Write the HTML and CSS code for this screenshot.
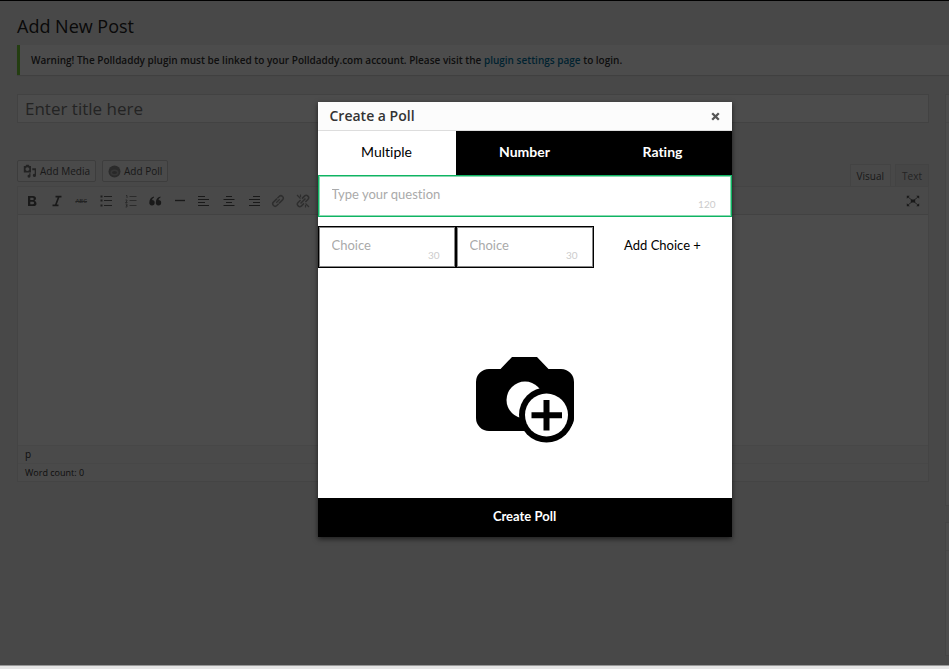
FILE: index.html
```html
<!DOCTYPE html>
<html lang="en">
<head>
<meta charset="utf-8">
<title>Add New Post</title>
<link rel="stylesheet" href="styles.css">
</head>
<body>
<div class="page">
  <h1 class="page-title">Add New Post</h1>
  <p class="notice">Warning! The Polldaddy plugin must be linked to your Polldaddy.com account. Please visit the <a href="#">plugin settings page</a> to login.</p>
  <div class="columns">
    <main class="main">
      <input class="title-input" type="text" placeholder="Enter title here" aria-label="Enter title here">
      <div class="media-row">
        <div class="media-buttons">
          <button class="wp-button" type="button">
            <svg width="14" height="14" viewBox="0 0 14 14"><path d="M.8 2h1.700l.8-1.300h2.400L6.500 2H8v6.500H.8zM4.400 3.200a1.900 1.900 0 1 0 .01 0z" fill="#777" fill-rule="evenodd"/><path d="M9.300 4.300H13v7.200a1.600 1.600 0 1 1-1.300-1.600V6.300H9.300z" fill="#777"/><path d="M6.200 9.300h1.300v2.900a1.500 1.500 0 1 1-1.300-1.500z" fill="#777"/></svg>
            Add Media</button>
          <button class="wp-button" type="button">
            <svg width="13" height="13" viewBox="0 0 13 13"><circle cx="6.500" cy="6.500" r="6" fill="#909090"/><ellipse cx="6.500" cy="7.500" rx="4" ry="3" fill="#b4b4b4"/><ellipse cx="6.500" cy="7.500" rx="2.500" ry="1.500" fill="#888"/></svg>
            Add Poll</button>
        </div>
        <div class="mode-tabs">
          <button class="mode-tab mode-tab-active" type="button">Visual</button>
          <button class="mode-tab" type="button">Text</button>
        </div>
      </div>
      <div class="editor">
        <div class="toolbar">
          <div class="tools">
            <button type="button" aria-label="Bold"><svg viewBox="0 0 14 14"><path d="M3 2h5q3 0 3 2.600 0 1.600-1.500 2.200 2 .5 2 2.600Q11.500 12 8.300 12H3zM5.300 3.800v2.300h2q1.400 0 1.400-1.200T7.300 3.800zM5.300 7.800v2.500h2.200q1.600 0 1.600-1.300T7.500 7.800z" fill="#555" fill-rule="evenodd"/></svg></button>
            <button type="button" aria-label="Italic"><svg viewBox="0 0 14 14"><path d="M5.500 2.700h6M2.500 11.300h6M8.800 2.700l-3.200 8.600" stroke="#555" stroke-width="1.700" fill="none"/></svg></button>
            <button type="button" class="strike">ABC</button>
            <button type="button" aria-label="Bulleted list"><svg viewBox="0 0 14 14"><path d="M5 2.500h8M5 6.500h8M5 11.500h8" stroke="#666"/><path d="M1.500 2.500h2M1.500 6.500h2M1.500 11.500h2" stroke="#666" stroke-width="2"/></svg></button>
            <button type="button" aria-label="Numbered list"><svg viewBox="0 0 14 14"><path d="M5.500 2.500h7M5.500 6.500h7M5.500 11.500h7M2 1.500h1V4M1.500 6H3v1L1.500 8.500H3.500M1.500 10H3v3H1.500M2 11.500h1" stroke="#777" fill="none" stroke-width=".8"/></svg></button>
            <button type="button" aria-label="Blockquote"><svg viewBox="0 0 14 14"><path d="M6 2.500Q1.500 3.500 1.300 8.500A2.700 2.700 0 1 0 4 6Q4.300 4.300 6 3.500zM12.500 2.500Q8 3.500 7.800 8.500A2.700 2.700 0 1 0 10.500 6Q10.800 4.300 12.500 3.500z" fill="#555"/></svg></button>
            <button type="button" aria-label="Horizontal line"><svg viewBox="0 0 14 14"><path d="M2 6.500h10" stroke="#555" stroke-width="1.400"/></svg></button>
            <button type="button" aria-label="Align left"><svg viewBox="0 0 14 14"><path d="M1 2.500h7M1 5.500h11M1 8.500h7M1 11.500h11" stroke="#555" stroke-width="1.200"/></svg></button>
            <button type="button" aria-label="Align center"><svg viewBox="0 0 14 14"><path d="M4 2.500h6M1.500 5.500h11M4 8.500h6M1.500 11.500h11" stroke="#555" stroke-width="1.200"/></svg></button>
            <button type="button" aria-label="Align right"><svg viewBox="0 0 14 14"><path d="M6 2.500h7M2 5.500h11M6 8.500h7M2 11.500h11" stroke="#555" stroke-width="1.200"/></svg></button>
            <button type="button" aria-label="Insert link"><svg viewBox="0 0 14 14"><g transform="rotate(-45 7 7)" fill="none" stroke="#999" stroke-width="1.500"><path d="M8 4.600H3A2.400 2.400 0 0 0 3 9.400H5.500M6 9.400h5a2.400 2.400 0 0 0 0-4.800H8.500"/><path d="M4.500 7h5" stroke-width="1.200"/></g></svg></button>
            <button type="button" aria-label="Remove link"><svg viewBox="0 0 14 14"><g transform="rotate(-45 7 7)" fill="none" stroke="#999" stroke-width="1.500"><path d="M6 4.600H2.500a2.400 2.400 0 0 0 0 4.800H6M8 4.600h3.500a2.400 2.400 0 0 1 0 4.800H8M3.500 7h7"/></g><path d="M1 1l3.500 3.500M4.500.5v2.500M9.500 9.500L13 13M9.500 11v2.500" stroke="#999" stroke-width="1.200"/></svg></button>
          </div>
          <button type="button" aria-label="Distraction free writing"><svg viewBox="0 0 14 14"><path d="M.8 1.800h3L.8 4.800zM13.200 1.800v3l-3-3zM.8 12.200v-3l3 3zM13.200 12.200h-3l3-3zM4.800 5.500h4.400v3H4.800z" fill="#555"/><path d="M2 3l10 8M12 3L2 11" stroke="#555" stroke-width=".8"/></svg></button>
        </div>
        <textarea class="editor-body" aria-label="Post content"></textarea>
        <div class="path-row">p</div>
        <div class="path-row count-row">Word count: 0</div>
      </div>
    </main>
    <aside class="sidebar">
      <div class="side-box side-box-tall"></div>
      <div class="side-box side-box-short"></div>
    </aside>
  </div>
  <div class="overlay"></div>
</div>

<form class="modal" role="dialog" aria-labelledby="poll-heading">
  <header class="modal-header">
    <h2 id="poll-heading">Create a Poll</h2>
    <button class="close" type="button" aria-label="Close"><svg width="9" height="9" viewBox="0 0 9 9"><path d="M1.200 1.200l6.600 6.600M7.800 1.200L1.200 7.800" stroke="#555" stroke-width="2.300"/></svg></button>
  </header>
  <div class="tabs" role="tablist">
    <button class="tab tab-active" type="button" role="tab" aria-selected="true">Multiple</button>
    <button class="tab" type="button" role="tab">Number</button>
    <button class="tab" type="button" role="tab">Rating</button>
  </div>
  <div class="field field-question">
    <input type="text" placeholder="Type your question" aria-label="Question">
    <span class="limit">120</span>
  </div>
  <div class="choices">
    <div class="field">
      <input type="text" placeholder="Choice" aria-label="First choice">
      <span class="limit">30</span>
    </div>
    <div class="field">
      <input type="text" placeholder="Choice" aria-label="Second choice">
      <span class="limit">30</span>
    </div>
    <button class="add-choice" type="button">Add Choice +</button>
  </div>
  <button class="photo" type="button" aria-label="Add photo">
    <svg width="100" height="88" viewBox="0 0 100 88"><path d="M37 1h25l11.500 12H86a13 13 0 0 1 13 13v36a13 13 0 0 1-13 13H14A13 13 0 0 1 1 62V26a13 13 0 0 1 13-13h11.500z"/><circle cx="50" cy="44" r="18.500" fill="#fff"/><circle cx="71.500" cy="59" r="27.500"/><circle cx="71.500" cy="59" r="21.500" fill="#fff"/><path d="M71.500 44v30.500M56.500 59.200h30.500" stroke="#000" stroke-width="6"/></svg>
  </button>
  <button class="submit" type="submit">Create Poll</button>
</form>
</body>
</html>
```
FILE: styles.css
```css
* { box-sizing: border-box; }
body {
  margin: 0;
  min-height: 100vh;
  background: #e5e5e5;
  color: #333;
  font: 10px/16px "Open Sans", sans-serif;
}
button { margin: 0; padding: 0; border: 0; background: none; font: inherit; color: inherit; }
input, textarea { margin: 0; border: 0; border-radius: 0; outline: 0; font: inherit; color: inherit; background: #fff; }

.page {
  position: relative;
  min-height: calc(100vh - 3px);
  padding: 12px 0 0 17px;
  background: #f1f1f1;
  border-top: 1px solid #000;
  border-bottom: 1px solid #999;
}
.overlay { position: absolute; inset: 0; background: rgba(0, 0, 0, .7); }
.page-title { margin: 0 0 5px; color: #222; font-size: 18px; font-weight: 400; line-height: 27px; }
.notice {
  margin: 0 0 19px;
  padding: 7px 11px;
  background: #fff;
  border-left: 3px solid #7ad03a;
  box-shadow: 0 1px 1px rgba(0, 0, 0, .1);
  font-weight: 600;
}
.notice a { color: #0074a2; text-decoration: none; }
.columns { display: grid; grid-template-columns: 1fr 4px; gap: 16px; }
.main { min-width: 0; }
.title-input {
  display: block;
  width: 100%;
  height: 29px;
  padding: 0 7px;
  border: 1px solid #ddd;
  font-size: 17px;
}
.title-input::placeholder { color: #777; opacity: 1; }
.media-row { display: flex; justify-content: space-between; align-items: flex-end; margin-top: 37px; }
.media-buttons { display: flex; gap: 6px; padding-bottom: 4px; }
.wp-button {
  display: flex;
  align-items: center;
  gap: 3px;
  height: 22px;
  padding: 0 5px;
  background: #f7f7f7;
  border: 1px solid #ccc;
  border-radius: 2px;
  color: #555;
}
.mode-tabs { display: flex; gap: 4px; }
.mode-tab { height: 22px; padding: 0 6px; border: 1px solid #e0e0e0; border-bottom: 0; background: #ebebeb; color: #777; }
.mode-tab-active { background: #f5f5f5; color: #555; }
.editor { background: #fff; border: 1px solid #e5e5e5; }
.toolbar {
  display: flex;
  align-items: center;
  justify-content: space-between;
  height: 28px;
  padding: 0 8px 0 7px;
  background: #f5f5f5;
  border-bottom: 1px solid #ddd;
}
.tools { display: flex; justify-content: space-between; width: 285px; }
.toolbar button { display: flex; align-items: center; justify-content: center; width: 14px; height: 14px; flex: none; }
.toolbar svg { width: 14px; height: 14px; }
.toolbar .strike { font-size: 6px; font-weight: 600; color: #777; text-decoration: line-through; }
.editor-body { display: block; width: 100%; height: 230px; resize: none; }
.path-row { padding: 0 7px; line-height: 17px; border-top: 1px solid #eee; background: #f9f9f9; }
.count-row { font-size: 9px; }
.sidebar { display: flex; flex-direction: column; gap: 16px; }
.side-box { border: 1px solid #e5e5e5; border-right: 0; background: linear-gradient(#eee, #eee) 0 27px / 100% 1px no-repeat #fff; }
.side-box-tall { height: 412px; }
.side-box-short { height: 134px; }

.modal {
  position: absolute;
  top: 102px;
  left: calc(50% - 157px);
  width: 414px;
  background: #fff;
  box-shadow: 0 2px 5px rgba(0, 0, 0, .6);
  color: #000;
  font: 13px/20px Lato, sans-serif;
  font-variant-ligatures: none;
}
.modal-header {
  display: flex;
  align-items: center;
  justify-content: space-between;
  height: 29px;
  padding: 0 12px;
  background: #fcfcfc;
  border-bottom: 1px solid #ddd;
}
.modal-header h2 { margin: 0; color: #333; font: 600 14px/20px "Open Sans", sans-serif; }
.close { display: flex; }
.tabs { display: grid; grid-template-columns: repeat(3, 1fr); height: 44px; }
.tab { padding-bottom: 3px; background: #000; color: #fff; font-size: 14px; font-weight: 700; }
.tab-active { background: #fff; color: #000; font-weight: 400; }
.field { position: relative; border: 1px solid #000; box-shadow: inset 0 0 0 1px #888; height: 42px; }
.field-question { border-color: #0fb463; box-shadow: inset 0 0 0 1px #8ad9b1; }
.field input { display: block; width: 100%; height: 36px; padding: 0 13px; background: transparent; }
.field input::placeholder { color: #aaa; opacity: 1; }
.limit { position: absolute; right: 15px; bottom: 4px; color: #ccc; font-size: 10px; line-height: 16px; }
.choices { display: grid; grid-template-columns: repeat(3, 1fr); margin-top: 9px; }
.add-choice { height: 38px; }
.photo { display: flex; align-items: center; justify-content: center; width: 100%; height: 230px; padding-top: 34px; }
.submit { display: block; width: 100%; height: 39px; padding-bottom: 3px; background: #000; color: #fff; font-weight: 700; }
```
